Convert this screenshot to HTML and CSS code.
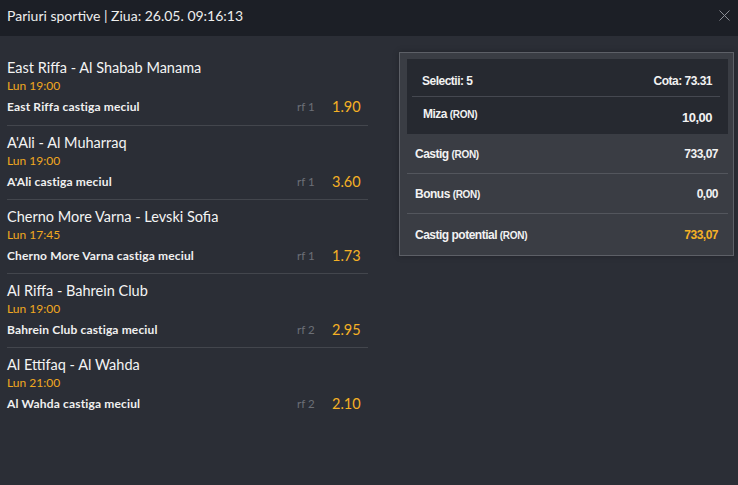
FILE: index.html
```html
<!DOCTYPE html>
<html lang="ro">
<head>
  <meta charset="UTF-8">
  <meta name="viewport" content="width=device-width, initial-scale=1.0">
  <title>Pariuri sportive</title>
  <link rel="stylesheet" href="styles.css">
</head>
<body>
  <header class="topbar">
    <h1>Pariuri sportive | Ziua: 26.05. 09:16:13</h1>
    <span class="close">
      <svg width="11" height="11" viewBox="0 0 11 11"><path d="M0.5 0.5 L10.5 10.5 M10.5 0.5 L0.5 10.5" stroke="#8a8d94" stroke-width="1" fill="none"/></svg>
    </span>
  </header>

  <div class="content">
    <div class="events">
      <div class="event">
        <div class="match">East Riffa - Al Shabab Manama</div>
        <div class="time">Lun 19:00</div>
        <div class="pick">
          <span class="pick-name">East Riffa castiga meciul</span>
          <span class="rf">rf 1</span>
          <span class="odd">1.90</span>
        </div>
      </div>
      <div class="event">
        <div class="match">A'Ali - Al Muharraq</div>
        <div class="time">Lun 19:00</div>
        <div class="pick">
          <span class="pick-name">A'Ali castiga meciul</span>
          <span class="rf">rf 1</span>
          <span class="odd">3.60</span>
        </div>
      </div>
      <div class="event">
        <div class="match">Cherno More Varna - Levski Sofia</div>
        <div class="time">Lun 17:45</div>
        <div class="pick">
          <span class="pick-name">Cherno More Varna castiga meciul</span>
          <span class="rf">rf 1</span>
          <span class="odd">1.73</span>
        </div>
      </div>
      <div class="event">
        <div class="match">Al Riffa - Bahrein Club</div>
        <div class="time">Lun 19:00</div>
        <div class="pick">
          <span class="pick-name">Bahrein Club castiga meciul</span>
          <span class="rf">rf 2</span>
          <span class="odd">2.95</span>
        </div>
      </div>
      <div class="event">
        <div class="match">Al Ettifaq - Al Wahda</div>
        <div class="time">Lun 21:00</div>
        <div class="pick">
          <span class="pick-name">Al Wahda castiga meciul</span>
          <span class="rf">rf 2</span>
          <span class="odd">2.10</span>
        </div>
      </div>
    </div>

    <div class="slip">
      <div class="slip-top">
        <div class="slip-row first">
          <span>Selectii: 5</span>
          <span>Cota: 73.31</span>
        </div>
        <div class="slip-row stake">
          <span>Miza <small>(RON)</small></span>
          <span class="stake-val">10,00</span>
        </div>
      </div>
      <div class="slip-row line">
        <span>Castig <small>(RON)</small></span>
        <span>733,07</span>
      </div>
      <div class="slip-row line">
        <span>Bonus <small>(RON)</small></span>
        <span>0,00</span>
      </div>
      <div class="slip-row last">
        <span>Castig potential <small>(RON)</small></span>
        <span class="win">733,07</span>
      </div>
    </div>
  </div>
</body>
</html>
```

FILE: styles.css
```css
body {
  margin: 0;
  background: #2b2e36;
  color: #f2f2f2;
  font-family: Lato, "Liberation Sans", sans-serif;
  height: 485px;
  overflow: hidden;
}
.topbar {
  height: 36px;
  background: #1c1f26;
  display: flex;
  align-items: center;
  justify-content: space-between;
  padding: 0 8px 0 7px;
}
.topbar h1 {
  margin: 0;
  font-size: 14px;
  font-weight: 400;
  color: #eeeeee;
  position: relative;
  top: -3px;
}
.close {
  display: flex;
  position: relative;
  top: -3px;
}
.content {
  display: flex;
  align-items: flex-start;
  padding: 15px 0 0 7px;
}
.events {
  width: 361px;
  flex-shrink: 0;
  margin-right: 31px;
}
.event {
  padding: 8px 0 8px;
  border-bottom: 1px solid #43464d;
}
.event:first-child {
  padding-bottom: 9px;
}
.event:last-child {
  border-bottom: none;
}
.match {
  font-size: 14.5px;
  line-height: 18px;
  color: #f4f4f4;
}
.time {
  font-size: 12px;
  line-height: 14px;
  color: #f0a820;
  margin-top: 2px;
}
.pick {
  display: flex;
  align-items: center;
  margin-top: 4px;
  height: 19px;
}
.pick-name {
  flex: 1;
  font-size: 12px;
  font-weight: 700;
  letter-spacing: 0.15px;
  color: #f0f0f0;
}
.rf {
  font-size: 11.5px;
  color: #6c6f76;
  width: 35px;
}
.odd {
  font-size: 14.5px;
  color: #f5b125;
  width: 26px;
  text-align: right;
  margin-right: 10px;
}
.slip {
  box-sizing: border-box;
  width: 335px;
  flex-shrink: 0;
  margin-top: 1px;
  background: #3a3d44;
  border: 1px solid #5d6067;
  padding: 6px 5px 0 7px;
  font-family: "Liberation Sans", Arial, sans-serif;
  font-weight: 700;
  font-size: 12px;
  letter-spacing: -0.5px;
  box-shadow: 0 0 6px rgba(0, 0, 0, 0.25);
}
.slip-top {
  background: #262930;
}
.slip-row {
  display: flex;
  justify-content: space-between;
  align-items: center;
  box-sizing: border-box;
  height: 40px;
  padding: 0 10px 0 8px;
}
.slip-row.first {
  height: 38px;
  margin: 0 8px 0 5px;
  padding: 6px 8px 0 10px;
  border-bottom: 1px solid #454850;
}
.slip-row.stake {
  height: 37px;
  margin: 0 8px 0 5px;
  padding: 10px 8px 0 11px;
  align-items: flex-start;
}
.stake-val {
  margin-top: 3px;
  font-size: 13px;
}
.slip-row.line {
  border-bottom: 1px solid #53565d;
  padding-top: 1px;
}
.slip-row.last {
  height: 41px;
}
.slip-row small {
  font-size: 10px;
  letter-spacing: -0.3px;
}
.win {
  color: #f5b125;
}
```
